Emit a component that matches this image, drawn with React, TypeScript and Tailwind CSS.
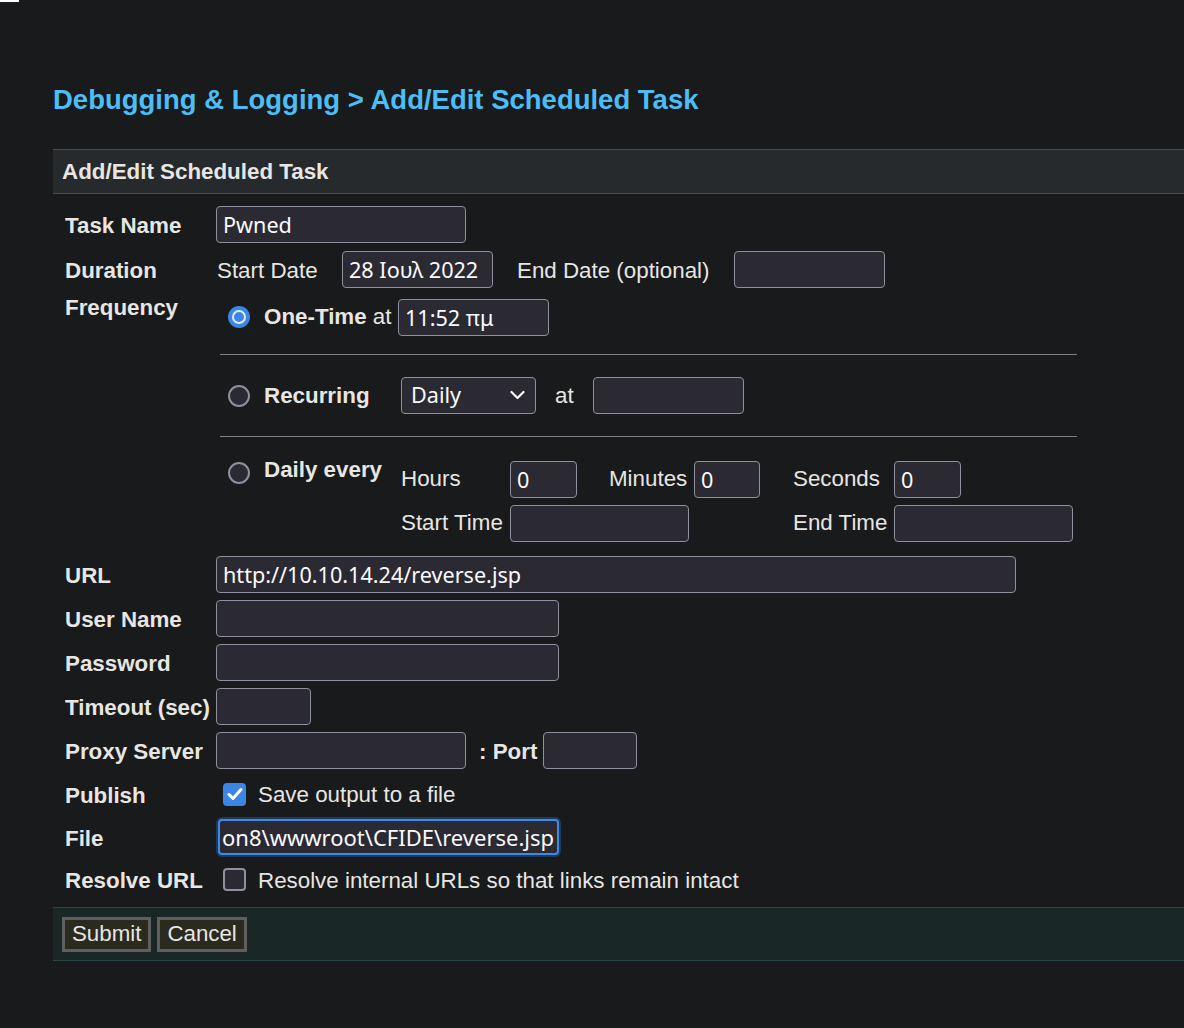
import React from "react";

const field =
  "h-[37px] rounded-[4px] border border-[#8f8f9d] bg-[#2b2a33] px-[6px] font-['Noto_Sans',sans-serif] text-[21.6px] text-[#fbfbfe] outline-none";

const Row = ({
  label,
  h,
  children,
}: {
  label: string;
  h: string;
  children?: React.ReactNode;
}) => (
  <div className={`flex items-center ${h}`}>
    <div className="w-[151px] shrink-0 pt-[3px] font-bold">{label}</div>
    <div className="flex items-center">{children}</div>
  </div>
);

const Radio = ({ checked }: { checked?: boolean }) =>
  checked ? (
    <span className="flex h-[22px] w-[22px] shrink-0 items-center justify-center rounded-full bg-[#3b86e5]">
      <span className="block h-[14px] w-[14px] rounded-full border-2 border-[#dfeaf8] bg-[#3b86e5]" />
    </span>
  ) : (
    <span className="block h-[22px] w-[22px] shrink-0 rounded-full border-2 border-[#8f8f9d] bg-[#2b2a33]" />
  );

const Checkbox = ({ checked }: { checked?: boolean }) =>
  checked ? (
    <span className="flex h-[23px] w-[23px] shrink-0 items-center justify-center rounded-[4px] bg-[#3b86e5]">
      <svg width="16" height="14" viewBox="0 0 16 14" fill="none">
        <path
          d="M2 7.5 L6 11.5 L14 2.5"
          stroke="#ffffff"
          strokeWidth="3"
          strokeLinecap="round"
          strokeLinejoin="round"
        />
      </svg>
    </span>
  ) : (
    <span className="block h-[23px] w-[23px] shrink-0 rounded-[4px] border-2 border-[#8f8f9d] bg-[#2b2a33]" />
  );

const Button = ({ children }: { children: React.ReactNode }) => (
  <button className="h-[35px] border-[3px] border-[#5f5f5f] bg-[#2a2a1f] px-[7px] text-[22.3px] leading-none text-[#e8e6e3]">
    {children}
  </button>
);

export default function App() {
  return (
    <div className="min-h-[1028px] overflow-hidden bg-[#181a1b] font-['Liberation_Sans',Arial,sans-serif] text-[22.35px] leading-[1.15] text-[#e8e6e3]">
      <div className="h-[2px] w-[19px] bg-white" />
      <div className="pl-[53px]">
        <h1 className="mt-[82px] text-[27.5px] font-bold leading-[32px] text-[#4dbdf5]">
          Debugging &amp; Logging &gt; Add/Edit Scheduled Task
        </h1>

        <div className="mt-[33px]">
          <div className="flex h-[45px] items-center border-y border-[#3c5254] bg-[#262a2d] pl-[9px] font-bold">
            Add/Edit Scheduled Task
          </div>

          <div className="pl-[12px] pt-[8px]">
            <Row label="Task Name" h="h-[45px]">
              <input className={`${field} w-[250px]`} defaultValue="Pwned" />
            </Row>

            <Row label="Duration" h="h-[45px]">
              <span className="w-[126px] pl-[1px] pt-[2px]">Start Date</span>
              <input className={`${field} w-[151px]`} defaultValue="28 Ιουλ 2022" />
              <span className="w-[241px] pl-[24px] pt-[2px]">End Date (optional)</span>
              <input className={`${field} w-[151px]`} />
            </Row>

            <div className="flex h-[260px]">
              <div className="w-[151px] shrink-0 pt-[3px] font-bold">Frequency</div>
              <div className="w-[861px] pl-[4px]">
                <div className="flex h-[50px] items-center">
                  <span className="ml-[8px]">
                    <Radio checked />
                  </span>
                  <span className="ml-[14px] w-[126px] whitespace-nowrap">
                    <b>One-Time</b> at
                  </span>
                  <input className={`${field} ml-[8px] w-[151px]`} defaultValue="11:52 πμ" />
                </div>
                <div className="mt-[12px] h-px bg-[#808080]" />

                <div className="flex h-[81px] items-center">
                  <div className="flex w-[181px] items-center">
                    <span className="ml-[8px]">
                      <Radio />
                    </span>
                    <span className="ml-[14px] font-bold">Recurring</span>
                  </div>
                  <div className="relative">
                    <select className={`${field} w-[135px] appearance-none pl-[9px]`} defaultValue="Daily">
                      <option>Daily</option>
                      <option>Weekly</option>
                      <option>Monthly</option>
                    </select>
                    <svg
                      className="pointer-events-none absolute right-[11px] top-[13px]"
                      width="15"
                      height="10"
                      viewBox="0 0 15 10"
                      fill="none"
                    >
                      <path
                        d="M1.5 2 L7.5 8 L13.5 2"
                        stroke="#fbfbfe"
                        strokeWidth="2.2"
                        strokeLinecap="round"
                        strokeLinejoin="round"
                      />
                    </svg>
                  </div>
                  <span className="ml-[19px] w-[38px]">at</span>
                  <input className={`${field} w-[151px]`} />
                </div>
                <div className="h-px bg-[#808080]" />

                <div className="flex pt-[20px]">
                  <div className="flex w-[181px] items-start">
                    <span className="ml-[8px] mt-[5px]">
                      <Radio />
                    </span>
                    <span className="ml-[14px] font-bold leading-[25px]">Daily every</span>
                  </div>
                  <div className="grid grid-cols-[109px_99px_85px_99px_101px_179px] grid-rows-[44px_44px] items-center">
                    <span>Hours</span>
                    <input className={`${field} w-[67px]`} defaultValue="0" />
                    <span>Minutes</span>
                    <input className={`${field} w-[66px]`} defaultValue="0" />
                    <span>Seconds</span>
                    <input className={`${field} w-[67px]`} defaultValue="0" />
                    <span>Start Time</span>
                    <input className={`${field} col-span-3 w-[179px]`} />
                    <span>End Time</span>
                    <input className={`${field} w-[179px]`} />
                  </div>
                </div>
              </div>
            </div>

            <Row label="URL" h="h-[44px]">
              <input className={`${field} w-[800px]`} defaultValue="http://10.10.14.24/reverse.jsp" />
            </Row>
            <Row label="User Name" h="h-[44px]">
              <input className={`${field} w-[343px]`} />
            </Row>
            <Row label="Password" h="h-[44px]">
              <input type="password" className={`${field} w-[343px]`} />
            </Row>
            <Row label="Timeout (sec)" h="h-[44px]">
              <input className={`${field} w-[95px]`} />
            </Row>
            <Row label="Proxy Server" h="h-[45px]">
              <input className={`${field} w-[250px]`} />
              <span className="w-[77px] pl-[13px] pt-[3px] font-bold">: Port</span>
              <input className={`${field} w-[94px]`} />
            </Row>
            <Row label="Publish" h="h-[42px]">
              <span className="ml-[7px]">
                <Checkbox checked />
              </span>
              <span className="ml-[12px] pt-[2px]">Save output to a file</span>
            </Row>
            <Row label="File" h="h-[44px]">
              <input
                className="ml-[2px] h-[36px] w-[341px] rounded-[4px] border-2 border-[#3d8ae8] bg-[#2b2a33] px-[2px] font-['Noto_Sans',sans-serif] text-[22px] text-[#fbfbfe] shadow-[0_0_0_2px_#1d3a58] outline-none"
                defaultValue="on8\wwwroot\CFIDE\reverse.jsp"
              />
            </Row>
            <Row label="Resolve URL" h="h-[41px]">
              <span className="ml-[7px]">
                <Checkbox />
              </span>
              <span className="ml-[12px] pt-[2px]">Resolve internal URLs so that links remain intact</span>
            </Row>
          </div>

          <div className="mt-[7px] flex h-[54px] items-center gap-[6px] border-y border-[#2e4446] bg-[#1a2727] pl-[9px]">
            <Button>Submit</Button>
            <Button>Cancel</Button>
          </div>
        </div>
      </div>
    </div>
  );
}
